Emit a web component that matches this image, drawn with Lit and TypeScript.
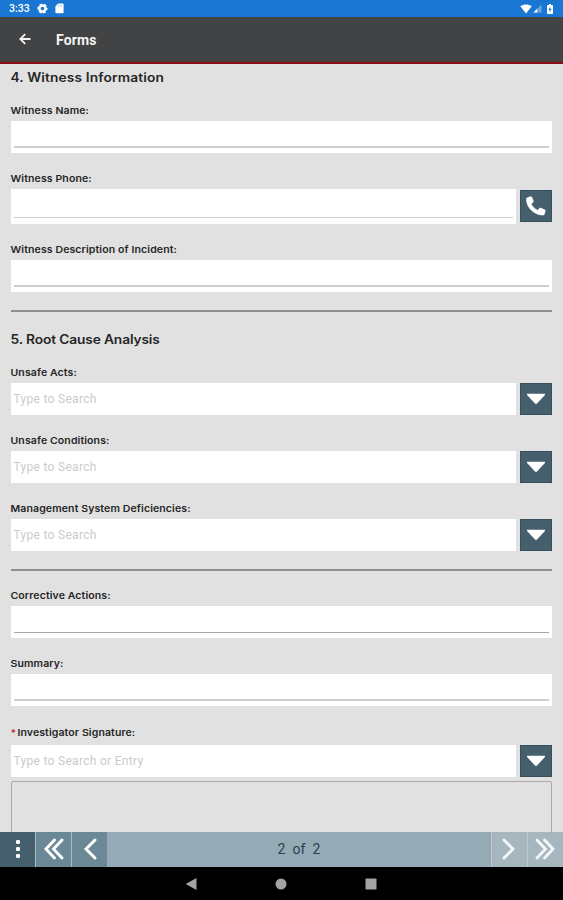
import { LitElement, html, css, svg, nothing } from "lit";
import { customElement, property } from "lit/decorators.js";

const phone = svg`<svg width="22" height="22" viewBox="0 0 22 22"><path fill="#fff" stroke="#fff" stroke-width=".8" stroke-linejoin="round" d="M2.1 3 5.300 1.800c.6-.3 1.200 0 1.500.6l1.400 3.500c.2.5.1 1-.3 1.300L6 8.900c1.400 2.800 3.700 5.100 6.700 6.500l1.700-1.900c.3-.4.8-.5 1.300-.3l3.700 1.600c.6.3.9.8.7 1.400l-.8 2.800c-.1.6-.6 1-1.200 1C9.300 20 1.600 12.500 1.500 4.400c0-.5.1-1.200.6-1.400z"/></svg>`;
const caret = svg`<svg width="20" height="12" viewBox="0 0 20 12"><path fill="#fff" d="M1.600.8h16.800c.7 0 1 .7.500 1.200L11 10.500c-.6.6-1.400.6-2 0L1.100 2C.6 1.500.9.8 1.600.8z"/></svg>`;

@customElement("form-field")
export class FormField extends LitElement {
  @property() label = "";
  @property() placeholder = "";
  @property() action = "";
  @property({ type: Boolean }) required = false;
  @property({ type: Boolean }) dark = false;

  static styles = css`
    :host { display: block; margin-bottom: 19px; }
    .label { font: 600 9.500px/14px Inter, sans-serif; height: 14px; color: #262626; white-space: nowrap;
      margin-bottom: var(--gap, 3px); letter-spacing: 0.1px; transform: translate(-.5px, .4px) scaleX(1.107); transform-origin: 0 50%; }
    .star { color: #c62835; margin-right: 1px; }
    .row { display: flex; gap: 4px; align-items: center; }
    .input { flex: 1; height: var(--h, 32px); background: #fff; box-sizing: border-box; padding: 0 3px;
      display: flex; align-items: center; color: #cbcbcb; font: 12px/16px Roboto, sans-serif; letter-spacing: .3px; }
    .input.lined { align-items: flex-end; padding-bottom: 5.500px; }
    .line { flex: 1; height: 1.500px; background: #cecece; }
    .line.dark { background: #a6a6a6; height: 1px; }
    .btn { width: 32px; height: 32px; box-sizing: border-box; border: 1px solid #35505f; background: #455f6c;
      display: flex; align-items: center; justify-content: center; }
    svg { display: block; }
  `;

  render() {
    return html`
      <div class="label">${this.required ? html`<span class="star">*</span>` : nothing}${this.label}</div>
      <div class="row">
        <div class="input ${this.placeholder ? "" : "lined"}">
          ${this.placeholder || html`<div class="line ${this.dark ? "dark" : ""}"></div>`}
        </div>
        ${this.action
          ? html`<div class="btn">${this.action === "call" ? phone : caret}</div>`
          : nothing}
      </div>`;
  }
}

@customElement("app-root")
export class AppRoot extends LitElement {
  static styles = css`
    :host { display: flex; flex-direction: column; height: 900px; overflow: hidden; background: #e1e1e1;
      font-family: Roboto, sans-serif; }
    svg { display: block; }
    .status { height: 17px; flex: none; background: #1976d2; color: #fff; display: flex; align-items: center;
      padding: 0 10px 0 9px; font: 500 10.500px/17px Roboto, sans-serif; }
    .status .left { flex: 1; display: flex; align-items: center; }
    .status .gear { margin-left: 7px; }
    .status .card { margin-left: 7px; }
    .status .right { display: flex; align-items: center; }
    .status .signal { margin-left: 1px; }
    .status .battery { margin-left: 5px; }
    .header { height: 47px; flex: none; box-sizing: border-box; background: #414344; border-bottom: 2px solid #8c0a16;
      display: flex; align-items: center; padding-left: 19px; color: #f4f4f4; }
    .header svg { margin-top: -1px; }
    .title { font: 700 14px/20px Roboto, sans-serif; margin-left: 25px; margin-top: 1px; letter-spacing: .15px; }
    .form { flex: 1; min-height: 0; overflow: hidden; padding: 4px 11px 0 10.500px; display: flex; flex-direction: column; }
    .form > * { flex: none; }
    .heading { font: 600 12.500px/18px Inter, sans-serif; color: #262626; margin-bottom: 18px; white-space: nowrap;
      transform: translate(-.5px, .6px) scaleX(1.1); transform-origin: 0 50%; }
    .h4 { letter-spacing: .12px; }
    .h5 { letter-spacing: -.12px; }
    .rule { height: 1.500px; background: #8f8f8f; margin: -1px 0 18.500px; }
    .phone { --h: 34.500px; }
    .desc { --h: 32.500px; }
    .sign { --gap: 5px; margin: 1px 0 4px; }
    .pad { height: 80px; border: 1.500px solid #a9a9a9; border-radius: 2px; box-sizing: border-box; }
    .pager { height: 35.500px; flex: none; background: #94aab5; display: flex; color: #2b3e4b; }
    .pager > div { display: flex; align-items: center; justify-content: center; box-sizing: border-box; }
    .more { width: 35px; background: #455f6c; }
    .prev { width: 36px; background: #6b8896; border-left: 1.500px solid #a9bcc5; }
    .next { width: 36px; background: #a6b6be; border-left: 1.500px solid #bdcbd1; padding-right: 2px; }
    .count { flex: 1; font: 14px/20px Roboto, sans-serif; letter-spacing: .1px; word-spacing: 3.500px; }
    .nav { height: 33px; flex: none; background: #000; display: flex; align-items: center; justify-content: center;
      gap: 78px; padding-right: 1px; box-sizing: border-box; }
  `;

  private chevrons(double: boolean, left: boolean, color: string) {
    const d = double ? "M11.500 2 3 11l8.500 9M19 2l-8.500 9 8.500 9" : "M16 2 7 11l9 9";
    return html`<svg width="22" height="22" viewBox="0 0 22 22">
      <path d=${d} transform=${left ? "" : "translate(22 0) scale(-1 1)"} fill="none" stroke=${color} stroke-width="2.900" stroke-linecap="round"></path></svg>`;
  }

  render() {
    return html`
      <div class="status">
        <div class="left"><span>3:33</span>
          <svg class="gear" width="11" height="11" viewBox="0 0 11 11">
            <circle cx="5.500" cy="5.500" r="3" fill="none" stroke="#fff" stroke-width="2.400" />
            <circle cx="5.500" cy="5.500" r="4.400" fill="none" stroke="#fff" stroke-width="1.400" stroke-dasharray="2.800 1.808" stroke-dashoffset="1.400" />
          </svg>
          <svg class="card" width="9" height="11" viewBox="0 0 9 11">
            <path fill="#fff" d="M3.200.5h4.600c.5 0 .8.300.8.800v8.200c0 .5-.3.800-.8.800H1.200c-.5 0-.8-.3-.8-.8V3.300z" />
            <path d="M3.500 2v1.500M5 2v1.500M6.500 2v1.500" stroke="#1976d2" stroke-width=".4" />
          </svg>
        </div>
        <div class="right">
          <svg width="12" height="10" viewBox="0 0 12 10"><path fill="#fff" d="M6 9.500.3 2.300c3.200-2.400 8.200-2.400 11.400 0z" /></svg>
          <svg class="signal" width="9" height="9" viewBox="0 0 9 9"><path fill="#6ba6e2" d="M8.500.5v8H.5z" /><path fill="#fff" d="M4.200 4.800v3.700H.5z" /></svg>
          <svg class="battery" width="6" height="10" viewBox="0 0 6 10">
            <path fill="#fff" d="M2 0h2v1h1.200c.4 0 .8.300.8.800v7.400c0 .5-.4.800-.8.800H.8C.4 10 0 9.700 0 9.200V1.800C0 1.300.4 1 .8 1H2z" />
            <path fill="#1976d2" d="M3.300 2.500 1.500 6h1.200v2.500L4.500 5H3.300z" />
          </svg>
        </div>
      </div>
      <div class="header">
        <svg width="12" height="12" viewBox="0 0 12 12"><path d="M11.500 6H1.500M6.200 1.100 1.300 6l4.900 4.900" fill="none" stroke="#f4f4f4" stroke-width="1.800" /></svg>
        <div class="title">Forms</div>
      </div>
      <div class="form">
        <div class="heading h4">4. Witness Information</div>
        <form-field label="Witness Name:"></form-field>
        <form-field class="phone" label="Witness Phone:" action="call"></form-field>
        <form-field class="desc" label="Witness Description of Incident:"></form-field>
        <div class="rule"></div>
        <div class="heading h5">5. Root Cause Analysis</div>
        <form-field label="Unsafe Acts:" placeholder="Type to Search" action="list"></form-field>
        <form-field label="Unsafe Conditions:" placeholder="Type to Search" action="list"></form-field>
        <form-field label="Management System Deficiencies:" placeholder="Type to Search" action="list"></form-field>
        <div class="rule"></div>
        <form-field label="Corrective Actions:" dark></form-field>
        <form-field label="Summary:"></form-field>
        <form-field class="sign" required label="Investigator Signature:" placeholder="Type to Search or Entry" action="list"></form-field>
        <div class="pad"></div>
      </div>
      <div class="pager">
        <div class="more"><svg width="6" height="20" viewBox="0 0 6 20"><rect x="1" y="1" width="4" height="4" rx="1.300" fill="#fff" /><rect x="1" y="8" width="4" height="4" rx="1.300" fill="#fff" /><rect x="1" y="15" width="4" height="4" rx="1.300" fill="#fff" /></svg></div>
        <div class="prev">${this.chevrons(true, true, "#fff")}</div>
        <div class="prev">${this.chevrons(false, true, "#fff")}</div>
        <div class="count">2 of 2</div>
        <div class="next">${this.chevrons(false, false, "#f3f6f8")}</div>
        <div class="next">${this.chevrons(true, false, "#f3f6f8")}</div>
      </div>
      <div class="nav">
        <svg width="12" height="14" viewBox="0 0 12 14"><path d="M11.500 1v12L.7 7z" fill="#a3a3a3" /></svg>
        <svg width="12" height="12" viewBox="0 0 12 12"><circle cx="6" cy="6" r="5.500" fill="#a3a3a3" /></svg>
        <svg width="12" height="12" viewBox="0 0 12 12"><rect x=".5" y=".5" width="11" height="11" rx=".8" fill="#a3a3a3" /></svg>
      </div>`;
  }
}
